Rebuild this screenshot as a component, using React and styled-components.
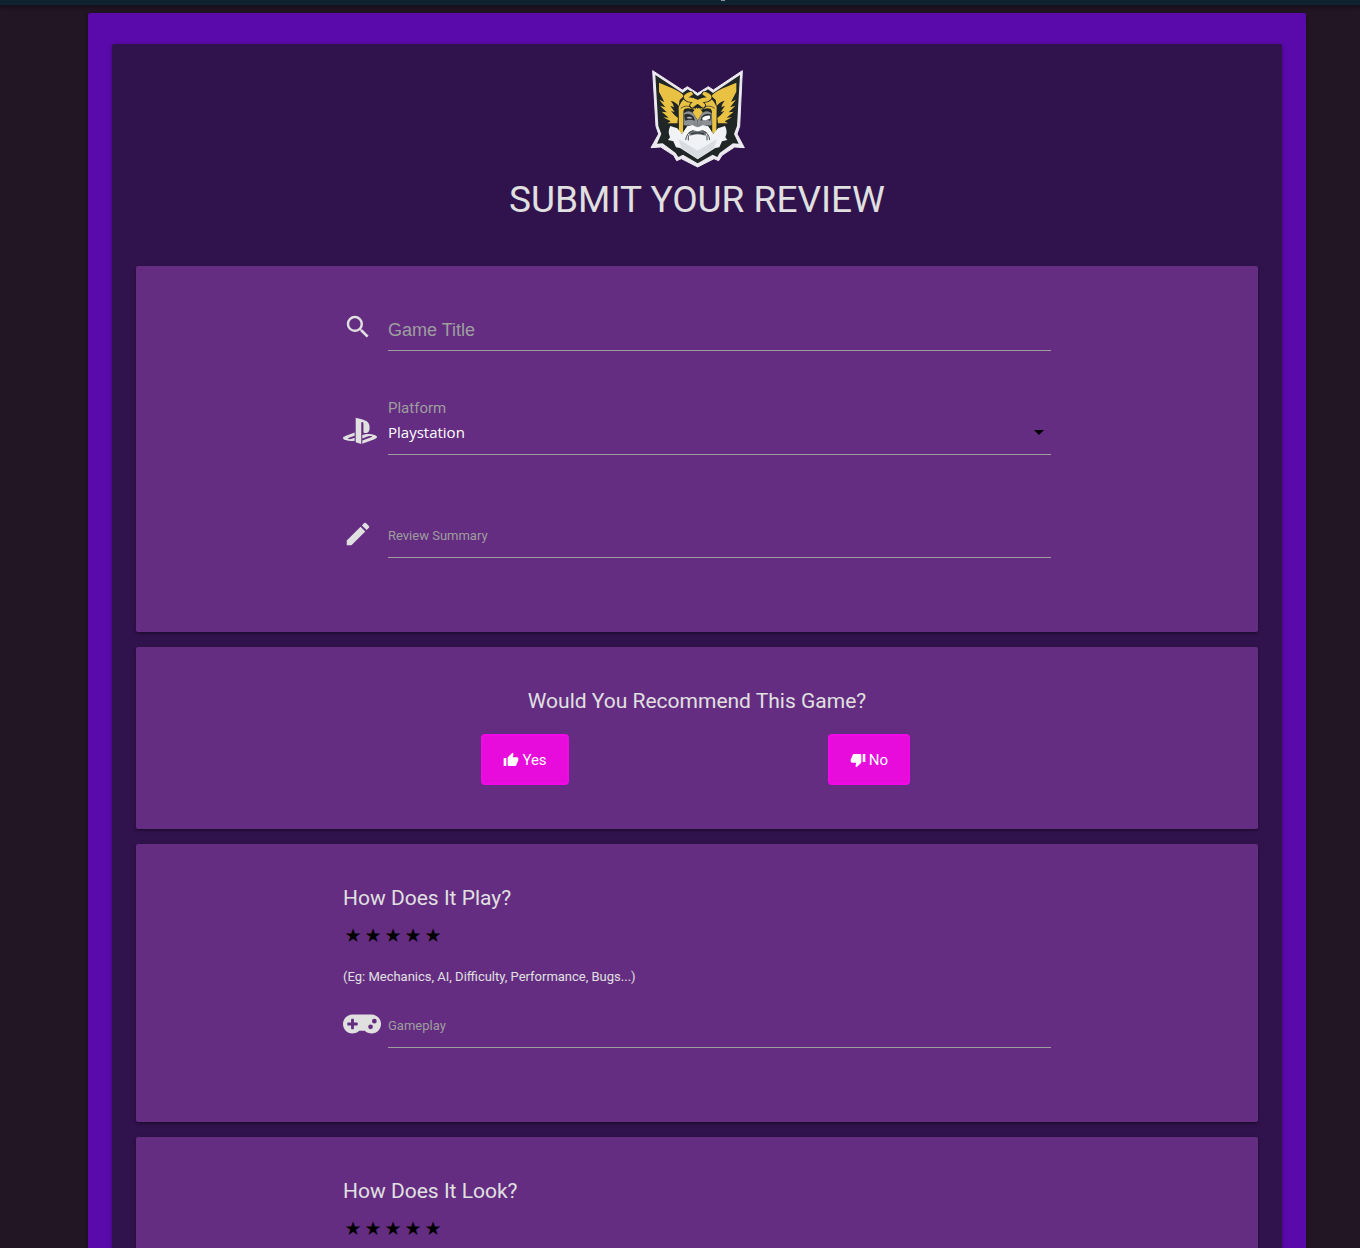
import React, { useState } from "react";
import styled, { createGlobalStyle } from "styled-components";
import { MdSearch, MdEdit, MdThumbUp, MdThumbDown, MdArrowDropDown, MdPhoto } from "react-icons/md";
import { FaPlaystation, FaGamepad } from "react-icons/fa";

const GlobalStyle = createGlobalStyle`
  *, *::before, *::after { box-sizing: border-box; }
  body {
    margin: 0;
    background: #221524;
    color: #e0e0e0;
    font-family: Roboto, "Liberation Sans", sans-serif;
  }
`;

const Page = styled.div`
  height: 100vh;
  overflow-y: auto;
  scrollbar-width: none;
`;

const NavEdge = styled.header`
  display: flex;
  justify-content: center;
  height: 5px;
  padding-left: 86px;
  background: #0f2230;
  box-shadow: 0 2px 4px rgba(0, 0, 0, 0.4);
`;

const NavMark = styled.span`
  width: 4px;
  height: 1px;
  background: #8b969c;
`;

const Outer = styled.main`
  margin: 8px 54px 16px 88px;
  padding: 31px 24px;
  border-radius: 2px;
  background: #5a0aaa;
  box-shadow: 0 2px 2px rgba(0, 0, 0, 0.14), 0 1px 5px rgba(0, 0, 0, 0.2);
`;

const Inner = styled.form`
  display: flex;
  flex-direction: column;
  gap: 15px;
  padding: 16px 24px 24px;
  border-radius: 2px;
  background: #30134c;
  box-shadow: 0 2px 2px rgba(0, 0, 0, 0.14), 0 1px 5px rgba(0, 0, 0, 0.2);
`;

const Heading = styled.div`
  display: flex;
  flex-direction: column;
  align-items: center;
  padding-bottom: 26px;
`;

const Title = styled.h1`
  margin: 0;
  font-size: 37px;
  line-height: 50px;
  font-weight: 400;
  text-transform: uppercase;
`;

const Section = styled.section`
  display: flex;
  flex-direction: column;
  padding: 37px 207px ${(p) => (p.$short ? "44px" : "74px")};
  border-radius: 2px;
  background: #642d82;
  box-shadow: 0 2px 2px rgba(0, 0, 0, 0.14), 0 3px 1px -2px rgba(0, 0, 0, 0.12),
    0 1px 5px rgba(0, 0, 0, 0.2);
`;

const FieldStack = styled.div`
  display: grid;
  gap: 48px;
`;

const Question = styled.h2`
  margin: 0;
  font-size: 21px;
  line-height: 34px;
  font-weight: 400;
  text-align: ${(p) => (p.$center ? "center" : "left")};
`;

const Row = styled.div`
  display: grid;
  grid-template-columns: 45px 1fr;
  align-items: end;
  padding-top: ${(p) => (p.$spaced ? "7px" : "0")};
`;

const IconSlot = styled.label`
  display: flex;
  align-items: center;
  height: 48px;
  color: #e0e0e0;
  svg {
    width: ${(p) => p.$width || 30}px;
    height: 32px;
  }
`;

const TextInput = styled.input`
  width: 100%;
  height: 48px;
  padding: ${(p) => (p.$large ? "8px 0 0" : "4px 0 0")};
  border: 0;
  border-bottom: 1px solid #9e9e9e;
  border-radius: 0;
  outline: none;
  background: transparent;
  color: #fff;
  font-family: ${(p) => (p.$large ? '"Liberation Sans", sans-serif' : "Roboto, sans-serif")};
  font-size: ${(p) => (p.$large ? "18px" : "13px")};
  &::placeholder { color: #9e9e9e; opacity: 1; }
`;

const SelectBox = styled.div`
  position: relative;
  display: flex;
  flex-direction: column;
`;

const SelectLabel = styled.label`
  font-size: 15px;
  line-height: 18px;
  color: #9e9e9e;
`;

const Select = styled.select`
  appearance: none;
  width: 100%;
  height: 38px;
  padding: 0 24px 8px 0;
  border: 0;
  border-bottom: 1px solid #9e9e9e;
  border-radius: 0;
  outline: none;
  background: transparent;
  color: #fff;
  font-family: "Open Sans", "Noto Sans", sans-serif;
  font-size: 15px;
  option { color: #222; }
`;

const Arrow = styled(MdArrowDropDown)`
  position: absolute;
  right: 0;
  bottom: 11px;
  width: 24px;
  height: 24px;
  color: #000;
  pointer-events: none;
`;

const Answers = styled.div`
  display: grid;
  grid-template-columns: 1fr 1fr;
  justify-items: center;
  padding: 16px 10px 0;
`;

const Answer = styled.button`
  display: flex;
  align-items: center;
  gap: 3px;
  height: 51px;
  padding: 0 20px;
  border: 2px solid #f408e8;
  border-radius: 4px;
  background: #e80cdc;
  color: #fff;
  font-family: inherit;
  font-size: 15px;
  cursor: pointer;
  svg { width: 16px; height: 16px; }
`;

const Stars = styled.fieldset`
  display: flex;
  margin: 0;
  padding: 8px 0 0;
  border: 0;
`;

const Star = styled.label`
  width: 20px;
  font-family: "DejaVu Sans", sans-serif;
  font-size: 19px;
  line-height: 24px;
  text-align: center;
  color: #000;
  cursor: pointer;
  input {
    appearance: none;
    display: block;
    width: 0;
    height: 0;
    margin: 0;
  }
`;

const Hint = styled.p`
  margin: 20px 0 13px;
  font-size: 13px;
  line-height: 20px;
`;

function Logo() {
  const half = (
    <>
      <path
        fill="#e9c244"
        d="M57 68 L97 85 Q120 95 132 108 L119 120 L116 138 Q108 126 92 122 Q101 132 102 142 L91 137 Q98 147 104 156 L93 153 Q103 166 114 174 L112 190 L82 190 L92 184 L70 172 L86 173 L65 155 L80 157 L60 137 L76 142 L58 119 L73 126 L57 95Z"
      />
      <path fill="#e9c244" d="M116 141 L124 126 L131 118 Q150 124 160 134 L166 150 Q148 142 134 146 Q128 152 130 164 L129 222 L117 216Z" />
      <path fill="none" stroke="#202525" strokeWidth="2" d="M122 145 Q138 132 160 144" />
      <path fill="#8d9194" d="M131 160 Q146 148 160 160 L173 182 L173 204 L150 197 L131 196Z" />
      <path fill="#2b2f31" d="M132 164 Q148 156 161 170 L165 182 Q149 177 135 182Z" />
      <path fill="#b9bdbf" d="M139 174 Q149 166 158 175 Q148 177 139 174Z" />
    </>
  );
  return (
    <svg width="115" height="115" viewBox="0 0 345 345" role="img" aria-label="Bearded warrior in a winged helmet">
      <path
        fill="#eceaf0"
        stroke="#eceaf0"
        strokeWidth="3"
        strokeLinejoin="round"
        d="M38 32 L127 90 L142 80 L173 100 L205 80 L220 90 L307 32 L299 199 L291 222 L313 263 L284 261 L246 286 L236 302 L222 296 L173 321 L124 296 L110 302 L101 286 L62 261 L33 263 L56 222 L48 199Z"
      />
      <path
        fill="#202525"
        d="M46 45 L128 99 L143 88 L173 108 L204 88 L219 99 L300 45 L291 198 L282 222 L296 251 L279 250 L239 279 L232 291 L218 284 L173 310 L129 284 L115 291 L107 279 L68 250 L51 251 L64 222 L55 198Z"
      />
      {half}
      <g transform="translate(346 0) scale(-1 1)">{half}</g>
      <path fill="#fff" d="M187 173 Q198 164 211 167 L209 177 L196 181 L187 179Z" />
      <path
        fill="#f0f2f5"
        d="M91 198 L112 205 L126 222 L134 210 L142 198 L173 200 L204 198 L212 210 L220 222 L234 205 L255 198 Q264 215 256 232 L262 240 L246 244 L238 262 L226 264 L173 298 L120 264 L108 262 L100 244 L84 240 L90 232 Q82 215 91 198Z"
      />
      <path fill="#d9dce1" d="M116 238 L173 272 L230 238 L222 264 L173 297 L124 264Z" />
      <path fill="#6f7579" d="M145 214 Q173 198 201 214 L197 227 Q173 218 149 227Z" />
      <path fill="none" stroke="#33383b" strokeWidth="4" d="M154 222 Q173 215 192 222" />
      <path fill="#fafafb" d="M133 214 Q140 195 159 196 L173 203 L187 196 Q206 195 213 214 L211 236 Q205 214 186 211 L173 214 L160 211 Q141 214 135 236Z" />
      <path fill="none" stroke="#454a4e" strokeWidth="3" strokeLinecap="round" d="M137 239 Q140 216 159 212 M209 239 Q206 216 187 212 M145 227 L145 240 M201 227 L201 240" />
      <path fill="#84888b" d="M158 184 L173 192 L188 184 L184 197 L173 202 L162 197Z" />
      <path fill="#e9c244" d="M173 138 L188 157 L173 181 L158 157Z" />
      <path fill="none" stroke="#202525" strokeWidth="18" strokeLinecap="round" d="M153 103 Q128 110 145 118 Q174 121 189 137 M193 103 Q218 110 201 118 Q172 121 157 137" />
      <path fill="none" stroke="#e9c244" strokeWidth="13" strokeLinecap="round" d="M152 102 Q128 110 145 118 Q174 121 189 136 M194 102 Q218 110 201 118 Q172 121 157 136" />
      <path fill="#202525" d="M150 109 L173 119 L196 109 L190 106 L173 113 L156 106Z" />
      <path fill="#202525" d="M166 140 L173 132 L180 140 L173 146Z" />
    </svg>
  );
}

function TextField({ id, label, icon, iconWidth, large, spaced }) {
  return (
    <Row $spaced={spaced}>
      <IconSlot htmlFor={id} $width={iconWidth} aria-label={label}>{icon}</IconSlot>
      <TextInput id={id} type="text" placeholder={label} $large={large} />
    </Row>
  );
}

function Rating({ name }) {
  const [value, setValue] = useState(0);
  return (
    <Stars aria-label={`${name} rating`}>
      {[1, 2, 3, 4, 5].map((n) => (
        <Star key={n}>
          <input
            type="radio"
            name={name}
            aria-label={`${n} of 5`}
            checked={value === n}
            onChange={() => setValue(n)}
          />
          ★
        </Star>
      ))}
    </Stars>
  );
}

export default function App() {
  return (
    <Page>
      <GlobalStyle />
      <NavEdge><NavMark /></NavEdge>
      <Outer>
        <Inner onSubmit={(e) => e.preventDefault()}>
          <Heading>
            <Logo />
            <Title>Submit Your Review</Title>
          </Heading>

          <Section>
            <FieldStack>
              <TextField id="game" label="Game Title" icon={<MdSearch />} large />
              <Row>
                <IconSlot htmlFor="platform" $width={34} aria-label="Platform"><FaPlaystation /></IconSlot>
                <SelectBox>
                  <SelectLabel htmlFor="platform">Platform</SelectLabel>
                  <Select id="platform" defaultValue="Playstation">
                    <option>Playstation</option>
                    <option>Xbox</option>
                    <option>PC</option>
                  </Select>
                  <Arrow />
                </SelectBox>
              </Row>
              <TextField id="summary" label="Review Summary" icon={<MdEdit />} spaced />
            </FieldStack>
          </Section>

          <Section $short>
            <Question $center>Would You Recommend This Game?</Question>
            <Answers>
              <Answer type="button"><MdThumbUp />Yes</Answer>
              <Answer type="button"><MdThumbDown />No</Answer>
            </Answers>
          </Section>

          <Section>
            <Question>How Does It Play?</Question>
            <Rating name="play" />
            <Hint>(Eg: Mechanics, AI, Difficulty, Performance, Bugs...)</Hint>
            <TextField id="gameplay" label="Gameplay" icon={<FaGamepad />} iconWidth={38} />
          </Section>

          <Section>
            <Question>How Does It Look?</Question>
            <Rating name="look" />
            <Hint>(Eg: Graphics, Art Style, Animation...)</Hint>
            <TextField id="visuals" label="Visuals" icon={<MdPhoto />} />
          </Section>
        </Inner>
      </Outer>
    </Page>
  );
}
